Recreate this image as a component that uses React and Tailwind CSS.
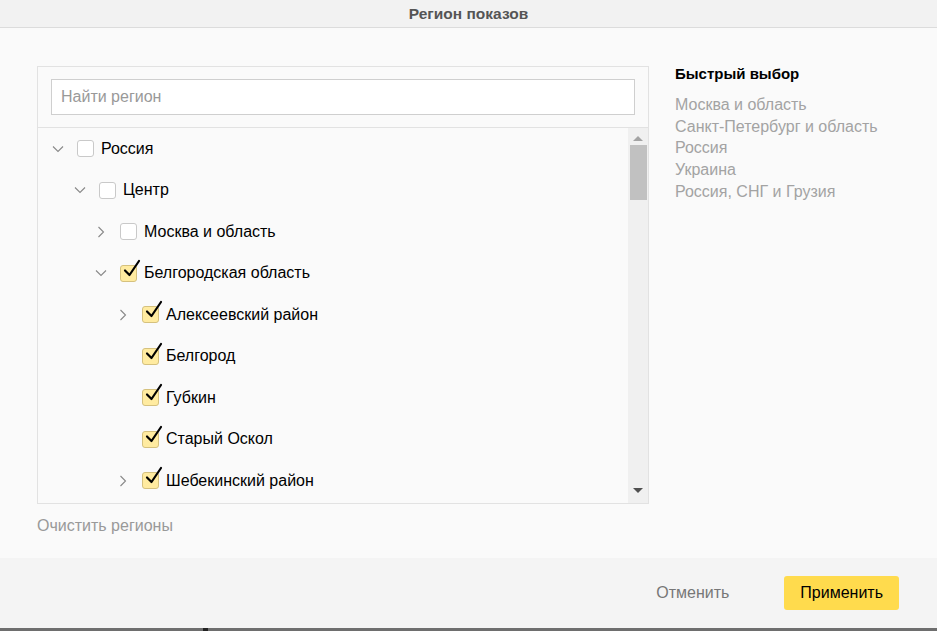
import React from "react";

const rows = [
  { label: "Россия", level: 0, arrow: "down", checked: false },
  { label: "Центр", level: 1, arrow: "down", checked: false },
  { label: "Москва и область", level: 2, arrow: "right", checked: false },
  { label: "Белгородская область", level: 2, arrow: "down", checked: true },
  { label: "Алексеевский район", level: 3, arrow: "right", checked: true },
  { label: "Белгород", level: 3, arrow: null, checked: true },
  { label: "Губкин", level: 3, arrow: null, checked: true },
  { label: "Старый Оскол", level: 3, arrow: null, checked: true },
  { label: "Шебекинский район", level: 3, arrow: "right", checked: true },
];

const quick = [
  "Москва и область",
  "Санкт-Петербург и область",
  "Россия",
  "Украина",
  "Россия, СНГ и Грузия",
];

const indents = ["pl-[13px]", "pl-[35px]", "pl-[56px]", "pl-[78px]"];

function Arrow({ dir }) {
  if (!dir) return <span className="block w-[14px] shrink-0" />;
  return (
    <svg width="14" height="14" viewBox="0 0 14 14" className="shrink-0">
      {dir === "down" ? (
        <path d="M2 4.5 L7 9.5 L12 4.5" fill="none" stroke="#888" strokeWidth="1.1" />
      ) : (
        <path d="M4.5 2 L9.5 7 L4.5 12" fill="none" stroke="#888" strokeWidth="1.1" />
      )}
    </svg>
  );
}

function Checkbox({ checked }) {
  return (
    <span
      className={
        "relative ml-[12px] block h-[17px] w-[17px] shrink-0 rounded-[3px] border " +
        (checked ? "border-[#d5c17e] bg-[#ffeba0]" : "border-[#c9c9c9] bg-white")
      }
    >
      {checked && (
        <svg width="22" height="22" viewBox="0 0 22 22" className="absolute left-[1px] top-[-8px]">
          <path d="M3 12.5 L7.5 17 L17 3" fill="none" stroke="#000" strokeWidth="2.2" strokeLinecap="round" strokeLinejoin="round" />
        </svg>
      )}
    </span>
  );
}

export default function App() {
  return (
    <div className="flex h-[631px] w-[937px] flex-col font-['Liberation_Sans',Arial,sans-serif]">
      <div className="flex h-[28px] shrink-0 items-center justify-center border-b border-[#dcdcdc] bg-[#f2f2f2] text-[15.5px] font-bold text-[#555]">
        Регион показов
      </div>

      <div className="flex flex-1 gap-[26px] bg-[#fafafa] pl-[37px] pt-[38px]">
        <div className="flex flex-col">
          <div className="flex h-[438px] w-[612px] flex-col border border-[#e2e2e2]">
            <div className="border-b border-[#e2e2e2] px-[13px] pb-[12px] pt-[12px]">
              <div className="flex h-[36px] items-center border border-[#cfcfcf] bg-white px-[9px] text-[16px] text-[#999]">
                Найти регион
              </div>
            </div>
            <div className="flex min-h-0 flex-1">
              <div className="flex-1">
                {rows.map((r) => (
                  <div
                    key={r.label}
                    className={"flex h-[41.5px] items-center " + indents[r.level]}
                  >
                    <Arrow dir={r.arrow} />
                    <Checkbox checked={r.checked} />
                    <span className="ml-[7px] text-[16px] text-black">{r.label}</span>
                  </div>
                ))}
              </div>
              <div className="flex w-[20px] flex-col items-center bg-[#f0f0f0]">
                <svg width="10" height="6" viewBox="0 0 10 6" className="mt-[7px]">
                  <path d="M0 6 L5 1 L10 6 Z" fill="#a3a3a3" />
                </svg>
                <div className="mt-[4px] h-[55px] w-[17px] bg-[#c1c1c1]" />
                <div className="flex-1" />
                <svg width="10" height="6" viewBox="0 0 10 6" className="mb-[9px]">
                  <path d="M0 0 L5 5 L10 0 Z" fill="#505050" />
                </svg>
              </div>
            </div>
          </div>
          <div className="mt-[10px] text-[16px] text-[#999]">Очистить регионы</div>
        </div>

        <div className="-mt-[2px]">
          <div className="text-[15px] font-bold leading-[20px] text-black">Быстрый выбор</div>
          <div className="mt-[10px] flex flex-col">
            {quick.map((q) => (
              <div key={q} className="text-[16px] leading-[21.7px] text-[#a3a3a3]">
                {q}
              </div>
            ))}
          </div>
        </div>
      </div>

      <div className="flex h-[70px] shrink-0 items-center justify-end gap-[55px] bg-[#f4f4f4] pr-[38px]">
        <span className="text-[16px] text-[#777]">Отменить</span>
        <button className="h-[34px] rounded-[3px] bg-[#ffdb4d] px-[16px] text-[16px] text-black">
          Применить
        </button>
      </div>
      <div className="relative h-[3px] shrink-0 bg-[#6e6e6e]">
        <div className="absolute left-[203px] top-0 h-[3px] w-[5px] bg-[#222]" />
      </div>
    </div>
  );
}
